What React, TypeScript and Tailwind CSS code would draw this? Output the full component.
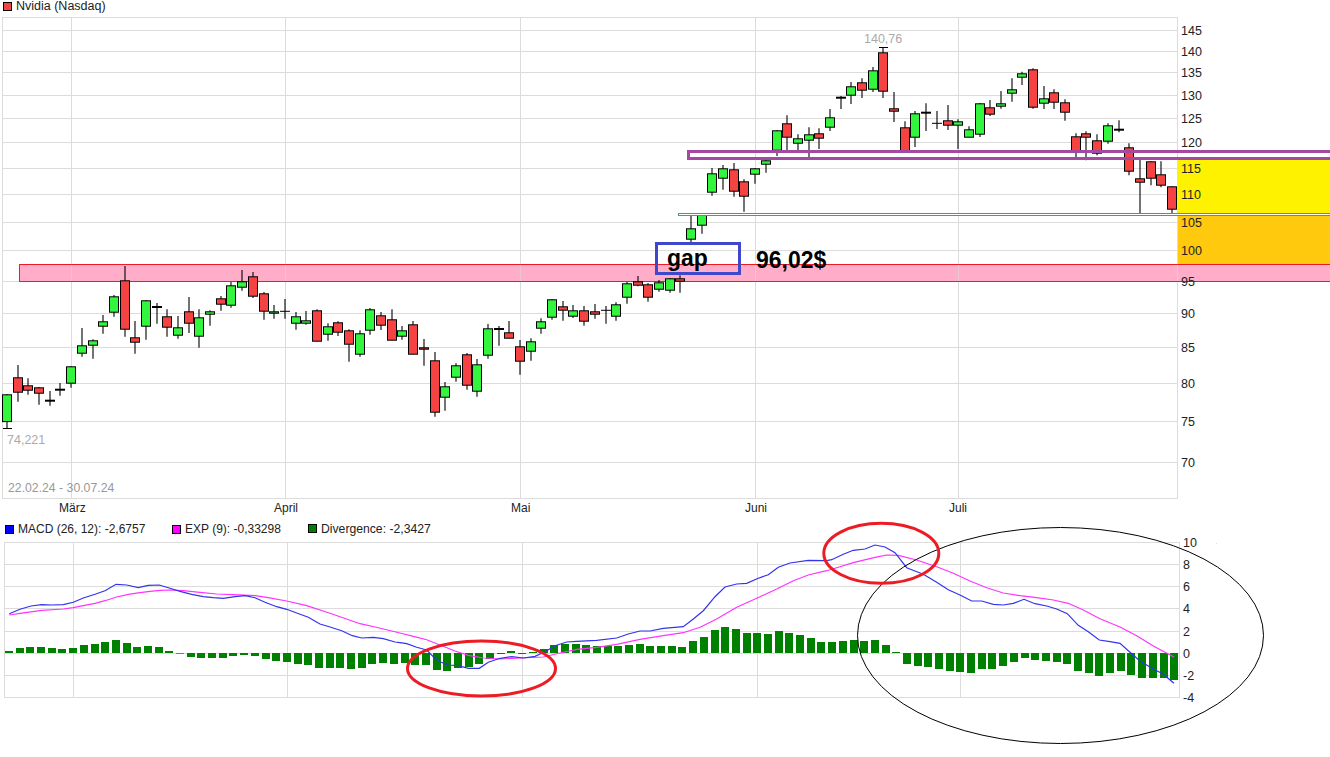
// Nvidia candlestick chart with MACD panel
type Candle = [number, number, number, number, "g" | "r" | "d" | "t"];

const GREEN = "#33f53d";
const RED = "#f54343";

// high, body top, body bottom, low, kind (d = thick doji, t = thin doji)
const CANDLES: Candle[] = [
  [394, 394.3, 421.7, 428.7, "g"],
  [365, 377.3, 392.3, 401.7, "r"],
  [378.3, 385.3, 390.3, 394.7, "r"],
  [387, 387.3, 393.3, 404.7, "r"],
  [391, 400.7, 400.7, 405.7, "d"],
  [383, 389.7, 389.7, 395.7, "d"],
  [366, 366.3, 383.3, 387.7, "g"],
  [328, 345.3, 353.3, 356.7, "g"],
  [339.3, 340.3, 345.3, 358.7, "g"],
  [315, 321.3, 326.3, 333.7, "g"],
  [295, 296.3, 312.3, 316.7, "g"],
  [266, 280.3, 329.3, 336.7, "r"],
  [321, 337.3, 342.3, 353.7, "r"],
  [300, 300.3, 326.3, 339.7, "g"],
  [303, 307, 307, 323.7, "d"],
  [309.3, 316.3, 327.3, 336.7, "r"],
  [316, 327.3, 335.3, 338.7, "g"],
  [297, 311.3, 323.3, 333, "r"],
  [309.3, 317.3, 336.3, 347.7, "g"],
  [310.3, 311.3, 314.3, 325.7, "g"],
  [296, 298.3, 304.3, 310.7, "r"],
  [282, 285.3, 305.3, 307.7, "g"],
  [270, 281.3, 287.3, 290.7, "g"],
  [272, 276.3, 296.3, 298, "r"],
  [292, 293.3, 311.3, 319.7, "r"],
  [305, 311.3, 313.3, 318.7, "g"],
  [299, 311.3, 311.3, 318.7, "t"],
  [312, 316.3, 323.3, 329.7, "g"],
  [311, 320.3, 323.3, 324.7, "g"],
  [309.3, 310.3, 341.3, 341.3, "r"],
  [323.3, 326.3, 334.3, 340.7, "g"],
  [321.3, 322.3, 332.3, 336, "r"],
  [329.3, 330.3, 344.3, 361.7, "r"],
  [330.3, 333.3, 354.3, 356.7, "g"],
  [308, 309.3, 330.3, 334.7, "g"],
  [312, 315.3, 325.3, 330, "r"],
  [309.3, 319.3, 340.3, 340.3, "r"],
  [326, 330.3, 336.3, 339.7, "g"],
  [321, 324.3, 354.3, 354.3, "r"],
  [339, 347.3, 349.3, 365.7, "r"],
  [352, 360.3, 412.3, 416.7, "r"],
  [382, 386.3, 397.3, 410.7, "g"],
  [363.3, 365.3, 377.3, 381.7, "g"],
  [353, 354.3, 385.3, 389.7, "r"],
  [359, 364.3, 391.3, 396.7, "g"],
  [324, 328.3, 355.3, 358.7, "g"],
  [326, 329, 329, 345.7, "d"],
  [321, 332.3, 338.3, 338.3, "r"],
  [340, 346.3, 361.3, 374.7, "r"],
  [338.3, 341.3, 351.3, 360.7, "g"],
  [318.3, 321.3, 328.3, 333.7, "g"],
  [299, 299.3, 317.3, 319.7, "g"],
  [301, 306.3, 310.3, 320.7, "r"],
  [305, 310.3, 316.3, 318, "g"],
  [306, 310.3, 321.3, 325.7, "r"],
  [304, 311.3, 314.3, 318.7, "r"],
  [306, 310.3, 310.3, 323.7, "t"],
  [302.3, 304.3, 316.3, 320.7, "g"],
  [282, 283.3, 297.3, 303.7, "g"],
  [276, 281.3, 285.3, 286.3, "r"],
  [283, 284.3, 297.3, 301.7, "r"],
  [280, 282.3, 289.3, 291.7, "g"],
  [278, 278.3, 290.3, 292.7, "g"],
  [275.3, 278.3, 281.3, 292.7, "r"],
  [214, 228.3, 239.3, 243.3, "g"],
  [214, 214, 225.3, 233.7, "g"],
  [168, 173.3, 192.3, 195.7, "g"],
  [165, 168.3, 178.3, 189.7, "g"],
  [163, 169.3, 191.3, 196.7, "r"],
  [179.3, 181.3, 196.3, 211.7, "r"],
  [168, 168.3, 174.3, 183.7, "g"],
  [160, 160.3, 164.3, 172.7, "g"],
  [130, 130.3, 150.3, 156, "g"],
  [115.3, 123.3, 137.3, 150, "r"],
  [134.3, 138.3, 143.3, 150, "g"],
  [127.3, 134.3, 140.3, 157, "g"],
  [128.3, 133.3, 138.3, 149, "r"],
  [109, 117.3, 127.3, 131, "g"],
  [96, 97.7, 97.7, 109, "d"],
  [82, 86.3, 95.3, 104, "g"],
  [78.3, 82.3, 90.3, 98, "r"],
  [67, 70.3, 89.3, 92, "g"],
  [47.3, 52.3, 91.3, 98, "r"],
  [92, 108.3, 111.3, 122, "r"],
  [121.3, 127.3, 151, 151, "r"],
  [111, 113.3, 137.3, 147, "g"],
  [103.3, 112.7, 112.7, 131, "d"],
  [111, 123.3, 123.3, 129, "t"],
  [105, 120.3, 125.3, 130, "r"],
  [119.3, 121.3, 125.3, 149, "g"],
  [126.3, 129.3, 137.3, 137.3, "g"],
  [103, 103.3, 134.3, 137, "g"],
  [100, 107.3, 114.3, 116, "r"],
  [91, 103.3, 106.3, 108.7, "g"],
  [78.3, 89.3, 93.3, 101.7, "g"],
  [71.7, 73.3, 77.3, 85, "g"],
  [68.3, 69.3, 107.3, 108.7, "r"],
  [86, 98.3, 103.3, 109, "g"],
  [89.3, 92.3, 102.3, 109, "r"],
  [99.3, 102.3, 112.3, 120.7, "r"],
  [133.3, 136.3, 151.3, 157.3, "r"],
  [131.3, 133.3, 137.3, 160.3, "r"],
  [134.3, 140.3, 153.3, 155.3, "r"],
  [123.3, 125.3, 141.3, 143.7, "g"],
  [120.3, 129.7, 129.7, 132.3, "d"],
  [143.3, 147.3, 171.3, 175.3, "r"],
  [160, 178.3, 182.3, 215.3, "r"],
  [161.3, 161.3, 178.3, 185.3, "r"],
  [161.3, 174.3, 185.3, 187.3, "r"],
  [186.3, 186.3, 209.3, 213.3, "r"],
];

// histogram ends, as read off the 3x crops: y = 515 + v / 3, zero line at v = 414
const HIST = [
  408, 399, 396, 396, 399, 402, 399, 390, 387, 381, 375, 384, 396, 393, 396, 408, 416, 426, 429, 429,
  429, 423, 420, 423, 432, 438, 441, 447, 450, 459, 459, 459, 462, 459, 447, 444, 447, 444, 450, 450,
  465, 468, 459, 456, 447, 432, 417, 408, 417, 411, 402, 390, 387, 387, 390, 393, 393, 393, 390, 387,
  393, 393, 393, 396, 378, 366, 345, 336, 342, 354, 354, 357, 348, 354, 360, 369, 381, 381, 378, 375,
  378, 375, 390, 411, 447, 453, 456, 462, 468, 471, 474, 462, 462, 453, 441, 429, 435, 438, 441, 447,
  468, 474, 483, 474, 468, 480, 489, 489, 489, 495,
];

const MACD_A = [28,296,60,283,93,273,125,269,155,270,190,269,220,262,250,249,285,238,315,227,348,208,380,210,415,218,445,211,478,210,510,220,540,229,575,238,610,245,640,248,670,250,705,245,735,242,765,248,795,262,830,275,860,283,890,294,925,307,960,327,990,336,1025,347,1057,362,1085,369,1120,367,1150,371,1185,381];
const MACD_B = [0,383,20,386,50,397,80,405,100,425,120,440,145,450,175,452,205,460,238,460,265,442,300,430,335,425,370,429,405,424,435,410,465,392,500,381,530,379,590,376,650,369,685,357,720,348,750,348,790,340,850,335,880,312,910,287,945,245,975,216,1010,207,1040,205,1075,190,1105,179,1135,157,1170,144,1225,136,1280,137];
const MACD_C = [35,134,70,118,100,106,135,102,165,90,195,96,225,113,260,158,310,178,350,202,385,224,420,240,455,258,485,258,520,268,550,270,580,265,612,253,645,266,680,273,710,282,742,296,775,331,805,350,838,375,870,380,900,385,930,412,960,438,990,456,1030,478,1062,505];

const EXP_A = [28,300,60,295,125,286,190,282,220,278,250,272,285,265,315,257,350,246,385,238,420,233,450,229,480,226,510,225,550,227,600,232,650,237,700,239,765,242,800,247,860,258,920,272,990,295,1080,326,1125,336];
const EXP_B = [0,354,40,364,80,374,120,390,165,408,205,421,250,429,300,432,360,429,430,426,480,414,530,403,590,397,650,388,720,373,790,362,850,353,900,337,950,312,1010,277,1070,250,1130,222,1180,197,1225,180,1280,167];
const EXP_C = [50,158,100,143,165,127,200,120,235,121,290,135,350,155,400,175,450,198,500,218,550,234,600,242,650,248,700,255,745,265,790,285,840,311,900,336,950,362,1000,393,1062,426];

function toPoints(raw: number[], x0: number) {
  const out: string[] = [];
  for (let i = 0; i < raw.length; i += 2) {
    out.push(`${(x0 + raw[i] / 3).toFixed(1)},${(515 + raw[i + 1] / 3).toFixed(1)}`);
  }
  return out.join(" ");
}

const macdPoints = [toPoints(MACD_A, 0), toPoints(MACD_B, 400), toPoints(MACD_C, 820)].join(" ");
const expPoints = [toPoints(EXP_A, 0), toPoints(EXP_B, 400), toPoints(EXP_C, 820)].join(" ");

const PRICE_TICKS = [
  [145, 30], [140, 51], [135, 72], [130, 95], [125, 118], [120, 142], [115, 168], [110, 194],
  [105, 222], [100, 250], [95, 281], [90, 313], [85, 347], [80, 383], [75, 421], [70, 462],
];
const MONTHS: [string, number][] = [["März", 59], ["April", 274], ["Mai", 511], ["Juni", 745], ["Juli", 949]];
const MAIN_V = [71, 285, 520, 755, 958];
const MACD_TICKS = [[10, 542], [8, 564], [6, 586], [4, 608], [2, 631], [0, 653], [-2, 675], [-4, 697]];
const MACD_V = [73, 287, 522, 757, 960];

function PriceChart() {
  return (
    <svg width={1330} height={504} viewBox="0 16 1330 504" className="block overflow-visible">
      {/* grid */}
      <g stroke="#dcdcdc" strokeWidth={1}>
        <line x1={2} x2={1178} y1={17.5} y2={17.5} />
        <line x1={2} x2={1178} y1={498.5} y2={498.5} />
        {PRICE_TICKS.map(([, y]) => (
          <line key={y} x1={2} x2={1178} y1={y + 0.5} y2={y + 0.5} />
        ))}
        <line x1={2.5} x2={2.5} y1={17} y2={499} />
        <line x1={1177.5} x2={1177.5} y1={17} y2={499} />
        {MAIN_V.map((x) => (
          <line key={x} x1={x + 0.5} x2={x + 0.5} y1={17} y2={499} />
        ))}
      </g>

      {/* areas marked by hand */}
      <rect x={1178} y={160} width={152} height={53} fill="#fff200" />
      <rect x={1178} y={216} width={152} height={48} fill="#ffc90e" />
      <rect x={19.5} y={264.5} width={1320} height={17} fill="#ffadc9" stroke="#ed1c24" strokeWidth={1} />
      <g stroke="#e8c8d4" strokeWidth={1}>
        {[...MAIN_V, 1177].map((x) => (
          <line key={x} x1={x + 0.5} x2={x + 0.5} y1={265} y2={281} />
        ))}
      </g>

      {/* candles */}
      {CANDLES.map(([high, top, bottom, low, kind], i) => {
        const x = Math.round(7 + 10.688 * i);
        const doji = kind === "d" || kind === "t";
        return (
          <g key={i}>
            <line x1={x} x2={x} y1={high} y2={low} stroke="#000" strokeWidth={1.1} />
            {doji ? (
              <line x1={x - 5} x2={x + 5} y1={top} y2={top} stroke="#000" strokeWidth={kind === "d" ? 2 : 1} />
            ) : (
              <rect
                x={x - 4.5}
                y={top + 0.5}
                width={9}
                height={bottom - top - 0.6}
                fill={kind === "g" ? GREEN : RED}
                stroke="#000"
                strokeWidth={1}
              />
            )}
          </g>
        );
      })}
      <line x1={3} x2={12} y1={428.5} y2={428.5} stroke="#000" strokeWidth={1} />
      <line x1={879} x2={888} y1={47.5} y2={47.5} stroke="#000" strokeWidth={1} />

      <rect x={688.5} y={151.5} width={660} height={7} fill="none" stroke="#a349a4" strokeWidth={3} />
      <rect x={678.5} y={213.5} width={660} height={2} fill="#fff" stroke="#3fa45f" strokeWidth={1} />
      <rect x={656.5} y={243.5} width={83} height={30} fill="none" stroke="#3f48cc" strokeWidth={3} />

      <text x={667} y={265.5} className="text-[23px] font-bold fill-black">gap</text>
      <text x={756} y={268} className="text-[23px] font-bold fill-black">96,02$</text>

      <text x={864} y={43} className="text-[12.5px] fill-[#aaaaaa]">140,76</text>
      <text x={7} y={444} className="text-[12.5px] fill-[#aaaaaa]">74,221</text>
      <text x={8} y={492} className="text-[12.25px] fill-[#999999]">22.02.24 - 30.07.24</text>

      {PRICE_TICKS.map(([v, y]) => (
        <text key={v} x={1181} y={y + 5} className="text-[12.5px] fill-[#222222]">{v}</text>
      ))}
      {MONTHS.map(([m, x]) => (
        <text key={m} x={x} y={511.5} className="text-[12px] fill-[#222222]">{m}</text>
      ))}
    </svg>
  );
}

function MacdChart() {
  return (
    <svg width={1330} height={221} viewBox="0 536 1330 221" className="block overflow-visible">
      <g stroke="#dcdcdc" strokeWidth={1}>
        {MACD_TICKS.map(([, y]) => (
          <line key={y} x1={4} x2={1180} y1={y + 0.5} y2={y + 0.5} />
        ))}
        <line x1={4.5} x2={4.5} y1={542} y2={698} />
        <line x1={1179.5} x2={1179.5} y1={542} y2={698} />
        {MACD_V.map((x) => (
          <line key={x} x1={x + 0.5} x2={x + 0.5} y1={542} y2={698} />
        ))}
      </g>

      {HIST.map((v, i) => {
        const y = 515 + Math.min(v, 414) / 3;
        const h = Math.abs(v - 414) / 3;
        return <rect key={i} x={Math.round(9 + 10.69 * i) - 4} y={y} width={8} height={h} fill="#008000" />;
      })}

      <polyline points={expPoints} fill="none" stroke="#ff33ff" strokeWidth={1.2} />
      <polyline points={macdPoints} fill="none" stroke="#3333ee" strokeWidth={1.2} />

      <ellipse cx={1060.5} cy={635.5} rx={203} ry={108} fill="none" stroke="#000" strokeWidth={1} />
      <ellipse cx={481.5} cy={668.5} rx={74} ry={27.5} fill="none" stroke="#ed1c24" strokeWidth={3} />
      <ellipse cx={881.3} cy={553.3} rx={57.5} ry={30} fill="none" stroke="#ed1c24" strokeWidth={3} />
      <rect x={1216} y={543} width={1} height={1} fill="#dddddd" />

      {MACD_TICKS.map(([v, y]) => (
        <text key={v} x={1183} y={y + 5} className="text-[12.5px] fill-[#222222]">{v}</text>
      ))}
    </svg>
  );
}

function Swatch({ color }: { color: string }) {
  return <span className={"inline-block h-[9px] w-[9px] border border-black " + color} />;
}

export default function App() {
  return (
    <div className="h-[757px] w-[1330px] overflow-hidden bg-white font-['Liberation_Sans',sans-serif] text-[12px] text-[#222]">
      <div className="flex h-[16px] items-center gap-[4px] pb-[4px] pl-[3px] text-[12.5px] leading-none">
        <Swatch color="bg-[#f54343]" />
        <span>Nvidia (Nasdaq)</span>
      </div>
      <PriceChart />
      <div className="flex h-[16px] items-center pt-[2px] pl-[5px] leading-none">
        <div className="flex w-[167px] items-center gap-[4px]">
          <Swatch color="bg-[#0000ff]" />
          <span>MACD (26, 12): -2,6757</span>
        </div>
        <div className="flex w-[136px] items-center gap-[4px]">
          <Swatch color="bg-[#ff00ff]" />
          <span>EXP (9): -0,33298</span>
        </div>
        <div className="flex items-center gap-[4px]">
          <Swatch color="bg-[#008000]" />
          <span className="text-[12.2px]">Divergence: -2,3427</span>
        </div>
      </div>
      <MacdChart />
    </div>
  );
}
